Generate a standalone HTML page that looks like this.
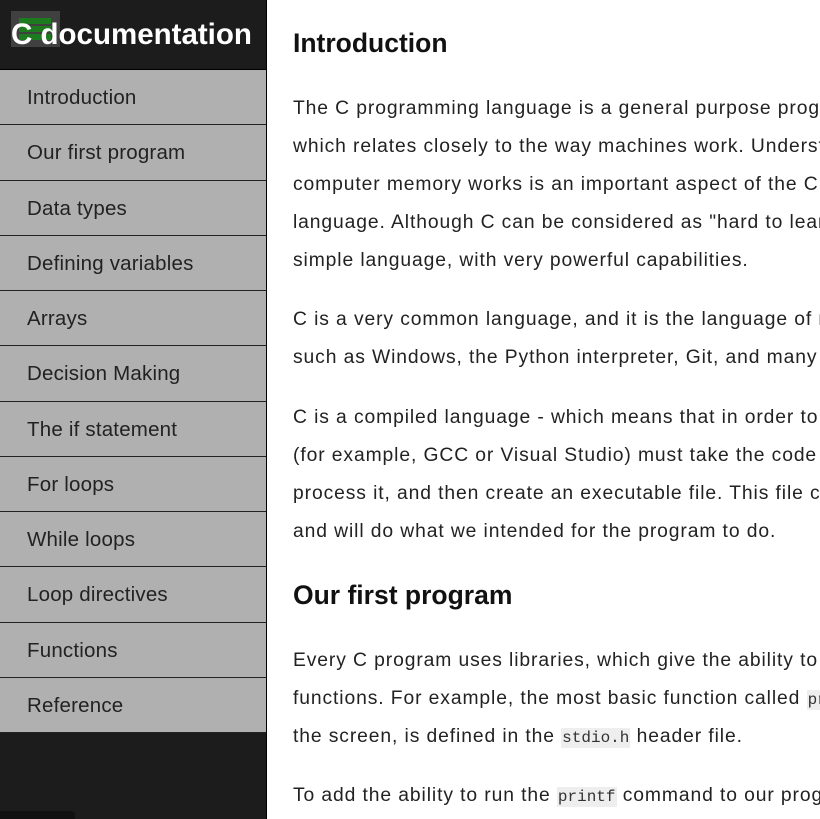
<!DOCTYPE html>
<html><head><meta charset="utf-8"><style>
html,body{margin:0;padding:0;width:820px;height:819px;overflow:hidden;background:#fff;font-family:"Liberation Sans",sans-serif;}
#nav{position:absolute;left:0;top:0;width:266px;height:819px;background:#1c1c1c;border-right:1px solid #000;}
#nav header{height:69px;position:relative;color:#fff;font-weight:bold;font-size:29.5px;line-height:70px;padding-left:11px;border-bottom:1px solid #000;}
.logo{position:absolute;left:11px;top:11px;width:49px;height:36px;background:rgba(80,80,80,0.7);}
.logo i{position:absolute;left:8px;height:6px;width:32px;background:#1e7a1e;}
#nav a{display:block;height:54.25px;line-height:56px;background:#b0b0b0;border-bottom:1px solid #222;color:#222;font-size:20.5px;letter-spacing:0.2px;padding-left:27px;text-decoration:none;}
.bar{position:absolute;left:0;top:811px;width:75px;height:8px;background:#111;border-radius:0 4px 0 0}
#main{position:absolute;left:293px;top:0;right:0;height:819px;overflow:hidden;color:#222;}
h2{position:absolute;margin:0;font-size:26.5px;font-weight:bold;color:#111;white-space:nowrap}
.l{position:absolute;left:0;font-size:19.3px;letter-spacing:0.9px;white-space:nowrap;line-height:24px;margin-top:1px}
code{font-family:"Liberation Mono",monospace;font-size:16px;letter-spacing:0;background:#eee;padding:1px 1px;color:#333}
</style></head><body>
<div id="nav">
<header><div class="logo"><i style="top:7px"></i><i style="top:15px"></i><i style="top:23px"></i></div><span style="position:relative">C documentation</span></header>
<a>Introduction</a><a>Our first program</a><a>Data types</a><a>Defining variables</a><a>Arrays</a><a>Decision Making</a><a>The if statement</a><a>For loops</a><a>While loops</a><a>Loop directives</a><a>Functions</a><a>Reference</a>
<div class="bar"></div>
</div>
<div id="main">
<h2 style="top:28px">Introduction</h2>
<div class="l" style="top:96px">The C programming language is a general purpose programming language,</div>
<div class="l" style="top:134px">which relates closely to the way machines work. Understanding how</div>
<div class="l" style="top:172px">computer memory works is an important aspect of the C programming</div>
<div class="l" style="top:210px">language. Although C can be considered as "hard to learn", C is in fact a very</div>
<div class="l" style="top:248px">simple language, with very powerful capabilities.</div>
<div class="l" style="top:307px">C is a very common language, and it is the language of many applications</div>
<div class="l" style="top:345px">such as Windows, the Python interpreter, Git, and many many more.</div>
<div class="l" style="top:405px">C is a compiled language - which means that in order to run it, the compiler</div>
<div class="l" style="top:443px">(for example, GCC or Visual Studio) must take the code that we wrote,</div>
<div class="l" style="top:481px">process it, and then create an executable file. This file can then be executed,</div>
<div class="l" style="top:519px">and will do what we intended for the program to do.</div>
<h2 style="top:580px">Our first program</h2>
<div class="l" style="top:648px">Every C program uses libraries, which give the ability to execute necessary</div>
<div class="l" style="top:686px">functions. For example, the most basic function called <code>printf</code>, which prints to</div>
<div class="l" style="top:724px">the screen, is defined in the <code>stdio.h</code> header file.</div>
<div class="l" style="top:783px">To add the ability to run the <code>printf</code> command to our program, we must add</div>
</div>
</body></html>
